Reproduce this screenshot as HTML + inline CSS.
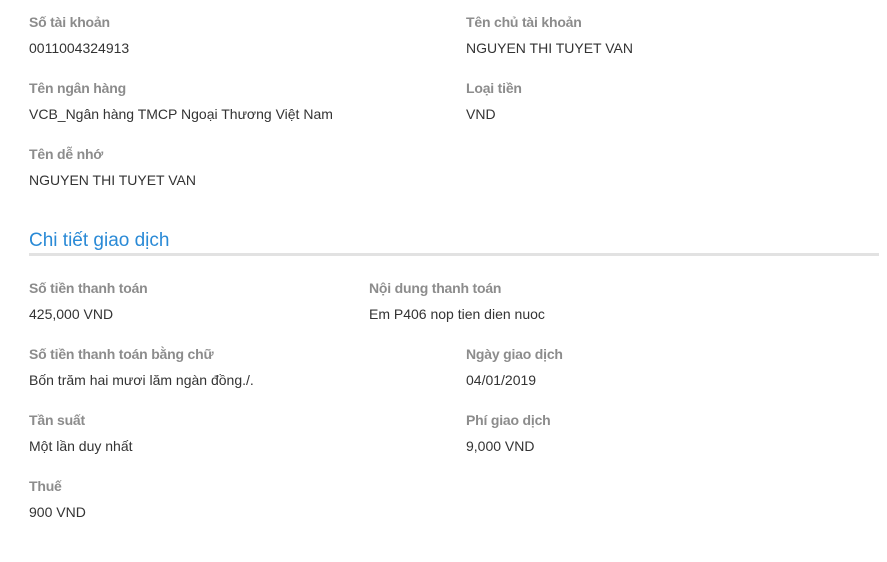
<!DOCTYPE html><html><head><meta charset="utf-8"><style>
body{margin:0;width:887px;height:562px;background:#fff;font-family:"Liberation Sans",sans-serif;position:relative;overflow:hidden}
.l,.v{position:absolute;line-height:20px;white-space:nowrap}
.l{color:#8c8c8c;font-size:14px;font-weight:bold;letter-spacing:-0.2px}
.v{color:#333;font-size:14px;letter-spacing:0}
.h{position:absolute;left:29px;top:229px;font-size:19px;color:#2a8ad6;line-height:24px}
.line{position:absolute;left:29px;top:253px;width:850px;height:3px;background:#e2e2e2}
</style></head><body>
<div class="l" style="left:29px;top:12px">Số tài khoản</div>
<div class="v" style="left:29px;top:38px">0011004324913</div>
<div class="l" style="left:466px;top:12px">Tên chủ tài khoản</div>
<div class="v" style="left:466px;top:38px">NGUYEN THI TUYET VAN</div>
<div class="l" style="left:29px;top:78px">Tên ngân hàng</div>
<div class="v" style="left:29px;top:104px">VCB_Ngân hàng TMCP Ngoại Thương Việt Nam</div>
<div class="l" style="left:466px;top:78px">Loại tiền</div>
<div class="v" style="left:466px;top:104px">VND</div>
<div class="l" style="left:29px;top:144px">Tên dễ nhớ</div>
<div class="v" style="left:29px;top:170px">NGUYEN THI TUYET VAN</div>
<div class="h">Chi tiết giao dịch</div>
<div class="line"></div>
<div class="l" style="left:29px;top:278px">Số tiền thanh toán</div>
<div class="v" style="left:29px;top:304px">425,000 VND</div>
<div class="l" style="left:369px;top:278px">Nội dung thanh toán</div>
<div class="v" style="left:369px;top:304px">Em P406 nop tien dien nuoc</div>
<div class="l" style="left:29px;top:344px">Số tiền thanh toán bằng chữ</div>
<div class="v" style="left:29px;top:370px">Bốn trăm hai mươi lăm ngàn đồng./.</div>
<div class="l" style="left:466px;top:344px">Ngày giao dịch</div>
<div class="v" style="left:466px;top:370px">04/01/2019</div>
<div class="l" style="left:29px;top:410px">Tần suất</div>
<div class="v" style="left:29px;top:436px">Một lần duy nhất</div>
<div class="l" style="left:466px;top:410px">Phí giao dịch</div>
<div class="v" style="left:466px;top:436px">9,000 VND</div>
<div class="l" style="left:29px;top:476px">Thuế</div>
<div class="v" style="left:29px;top:502px">900 VND</div>
</body></html>
